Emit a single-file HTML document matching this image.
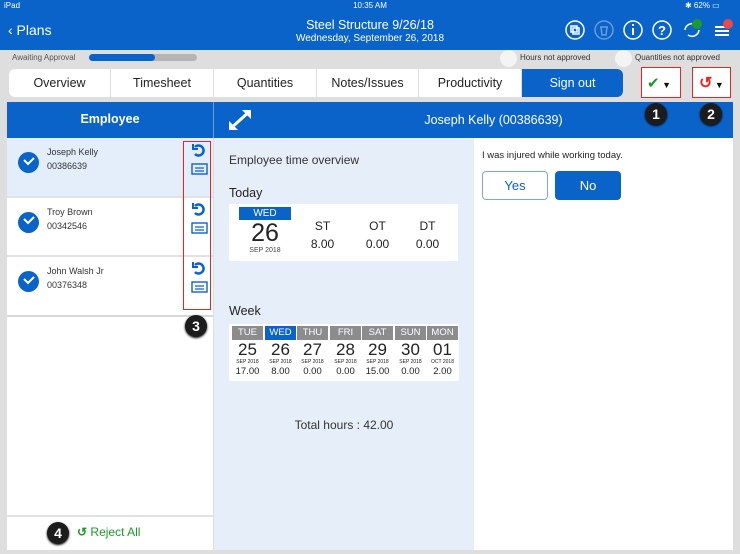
<!DOCTYPE html>
<html><head><meta charset="utf-8"><style>
*{margin:0;padding:0;box-sizing:border-box}
body{width:740px;height:554px;background:#dedede;font-family:"Liberation Sans",sans-serif;position:relative;overflow:hidden;color:#222}
.a{position:absolute}
.hdr{left:0;top:0;width:740px;height:50px;background:#0a63c9;color:#fff}
.tab{position:absolute;top:69px;height:28px;background:#fff;font-size:12.5px;text-align:center;line-height:28px;color:#222}
.badge{position:absolute;width:22px;height:22px;border-radius:50%;background:#1c1c1c;color:#fff;font-weight:bold;font-size:14px;text-align:center;line-height:22px;box-shadow:0 1px 2px #000}
.row{position:absolute;left:7px;width:206px;height:58px}
.chk{position:absolute;left:11px;top:14px;width:21px;height:21px;border-radius:50%;background:#0a63c9}
.nm{position:absolute;left:40px;top:7px;font-size:9px;line-height:14px;color:#333}
.day{position:absolute;top:326px;width:31px;text-align:center}
.day .h{background:#8c8c8c;color:#fff;font-size:9.5px;height:14px;line-height:14px}
.day .n{font-size:17px;line-height:19px}
.day .s{font-size:5px;line-height:6px}
.day .v{font-size:9.5px;line-height:13px}
</style></head><body>
<div class="a hdr">
 <div class="a" style="left:4px;top:1px;font-size:8px">iPad</div>
 <div class="a" style="left:0;width:740px;top:1px;font-size:8px;text-align:center">10:35 AM</div>
 <div class="a" style="left:685px;top:1px;font-size:8px">✱ 62% ▭</div>
 <div class="a" style="left:8px;top:22px;font-size:14px">‹ Plans</div>
 <div class="a" style="left:0;width:740px;top:18px;text-align:center;font-size:12.5px">Steel Structure 9/26/18</div>
 <div class="a" style="left:0;width:740px;top:33px;text-align:center;font-size:10px">Wednesday, September 26, 2018</div>
 <svg class="a" style="left:565px;top:18px" width="170" height="24" fill="none" stroke="#fff" stroke-width="1.5">
  <circle cx="10" cy="12" r="9"/><rect x="6" y="8" width="6" height="6"/><rect x="8" y="10" width="6" height="6"/>
  <circle cx="39" cy="12" r="9" stroke="#6a9be0"/><path d="M35 9h8M36 9l1 8h4l1-8" stroke="#6a9be0"/>
  <circle cx="68" cy="12" r="9"/><path d="M68 10v7M68 6v2" stroke-width="2"/>
  <circle cx="97" cy="12" r="9"/><text x="93" y="17" fill="#fff" stroke="none" font-size="13" font-weight="bold" font-family="Liberation Sans">?</text>
  <path d="M120 12a7 7 0 0 1 11-5M134 12a7 7 0 0 1-11 5"/>
  <circle cx="132" cy="6" r="5" fill="#1a9a2a" stroke="none"/>
  <path d="M150 9h14M150 13h14M150 17h14" stroke-width="2"/>
  <circle cx="163" cy="6" r="5" fill="#e84a4a" stroke="none"/>
 </svg>
</div>
<div class="a" style="left:12px;top:53px;font-size:8px;color:#555">Awaiting Approval</div>
<div class="a" style="left:89px;top:54px;width:108px;height:7px;border-radius:4px;background:#b5b5b5"><div style="width:66px;height:7px;border-radius:4px;background:#0a63c9"></div></div>
<div class="a" style="left:500px;top:50px;width:17px;height:17px;border-radius:50%;background:#f4f4f4"></div>
<div class="a" style="left:520px;top:53px;font-size:8px;color:#333">Hours not approved</div>
<div class="a" style="left:615px;top:50px;width:17px;height:17px;border-radius:50%;background:#f4f4f4"></div>
<div class="a" style="left:635px;top:53px;font-size:8px;color:#333">Quantities not approved</div>
<div class="tab" style="left:9px;width:101px;border-radius:6px 0 0 6px">Overview</div>
<div class="tab" style="left:111px;width:102px">Timesheet</div>
<div class="tab" style="left:214px;width:102px">Quantities</div>
<div class="tab" style="left:317px;width:101px">Notes/Issues</div>
<div class="tab" style="left:419px;width:102px">Productivity</div>
<div class="tab" style="left:522px;width:101px;background:#0a63c9;color:#fff;border-radius:0 6px 6px 0">Sign out</div>
<div class="a" style="left:641px;top:67px;width:40px;height:31px;border:1px solid #e22;background:#fff;font-size:15px;color:#1a9a2a;padding:6px 0 0 5px">✔<span style="font-size:9px;color:#111"> ▼</span></div>
<div class="a" style="left:692px;top:67px;width:39px;height:31px;border:1px solid #e22;background:#fff;font-size:16px;color:#e22;padding:5px 0 0 6px;font-weight:bold">↺<span style="font-size:9px;color:#111;font-weight:normal"> ▼</span></div>
<div class="a" style="left:7px;top:102px;width:726px;height:36px;background:#0a63c9"></div>
<div class="a" style="left:213px;top:102px;width:1px;height:36px;background:#6a9be0"></div>
<div class="a" style="left:7px;top:112px;width:206px;text-align:center;color:#fff;font-weight:bold;font-size:12.5px">Employee</div>
<div class="a" style="left:214px;top:113px;width:519px;text-align:center;color:#fff;font-size:12.5px;padding-left:40px">Joseph Kelly (00386639)</div>
<svg class="a" style="left:226px;top:107px" width="28" height="26" fill="#fff" stroke="#fff" stroke-width="3"><path d="M4 22L24 4"/><path d="M16 3h9v9z" stroke="none"/><path d="M3 14v9h9z" stroke="none"/></svg>
<div class="a" style="left:7px;top:138px;width:206px;height:412px;background:#fff"></div>
<div class="a" style="left:214px;top:138px;width:260px;height:412px;background:#e6eff9"></div>
<div class="a" style="left:474px;top:138px;width:259px;height:412px;background:#fff"></div>
<div class="row" style="top:138px;background:#e3eefa"><div class="chk"></div><div class="nm">Joseph Kelly<br>00386639</div></div>
<div class="a" style="left:7px;top:196px;width:206px;height:2px;background:#e2e2e2"></div>
<div class="row" style="top:198px"><div class="chk"></div><div class="nm">Troy Brown<br>00342546</div></div>
<div class="a" style="left:7px;top:255px;width:206px;height:2px;background:#e2e2e2"></div>
<div class="row" style="top:257px"><div class="chk"></div><div class="nm">John Walsh Jr<br>00376348</div></div>
<div class="a" style="left:7px;top:315px;width:206px;height:2px;background:#d8d8d8"></div>
<svg class="a" style="left:18px;top:138px" width="30" height="200" fill="none" stroke="#fff" stroke-width="2"><path d="M6 22l4 4 6-6"/><path d="M6 81l4 4 6-6"/><path d="M6 141l4 4 6-6"/></svg>
<div class="a" style="left:183px;top:141px;width:28px;height:169px;border:1px solid #e22"></div>
<svg class="a" style="left:190px;top:142px" width="20" height="160" fill="none" stroke="#0a63c9" stroke-width="2.5">
 <g><path d="M5 5a5 5 0 1 1 0 7"/><path d="M3 2v5h5" stroke-width="2"/><rect x="2" y="22" width="15" height="10" stroke-width="1.4"/><path d="M5 26h9M5 29h9" stroke-width="1.2"/></g>
 <g transform="translate(0,59)"><path d="M5 5a5 5 0 1 1 0 7"/><path d="M3 2v5h5" stroke-width="2"/><rect x="2" y="22" width="15" height="10" stroke-width="1.4"/><path d="M5 26h9M5 29h9" stroke-width="1.2"/></g>
 <g transform="translate(0,118)"><path d="M5 5a5 5 0 1 1 0 7"/><path d="M3 2v5h5" stroke-width="2"/><rect x="2" y="22" width="15" height="10" stroke-width="1.4"/><path d="M5 26h9M5 29h9" stroke-width="1.2"/></g>
</svg>
<div class="badge" style="left:645px;top:103px">1</div>
<div class="badge" style="left:700px;top:103px">2</div>
<div class="badge" style="left:185px;top:315px">3</div>
<div class="badge" style="left:47px;top:522px">4</div>
<div class="a" style="left:7px;top:515px;width:206px;height:2px;background:#e2e2e2"></div>
<div class="a" style="left:77px;top:525px;font-size:12px;color:#1a9a2a"><b>↺</b> Reject All</div>
<div class="a" style="left:229px;top:153px;font-size:12px;color:#333">Employee time overview</div>
<div class="a" style="left:229px;top:186px;font-size:12.5px">Today</div>
<div class="a" style="left:229px;top:204px;width:229px;height:57px;background:#fff"></div>
<div class="a" style="left:239px;top:207px;width:52px;height:13px;background:#0a63c9;color:#fff;font-size:10px;text-align:center;line-height:13px">WED</div>
<div class="a" style="left:239px;top:219px;width:52px;text-align:center;font-size:25px">26</div>
<div class="a" style="left:239px;top:247px;width:52px;text-align:center;font-size:7px;color:#444">SEP 2018</div>
<div class="a" style="left:300px;top:217px;width:45px;text-align:center;font-size:12px;line-height:18px">ST<br>8.00</div>
<div class="a" style="left:355px;top:217px;width:45px;text-align:center;font-size:12px;line-height:18px">OT<br>0.00</div>
<div class="a" style="left:405px;top:217px;width:45px;text-align:center;font-size:12px;line-height:18px">DT<br>0.00</div>
<div class="a" style="left:229px;top:304px;font-size:12.5px">Week</div>
<div class="a" style="left:229px;top:324px;width:230px;height:57px;background:#fff"></div>
<div class="day" style="left:232px"><div class="h">TUE</div><div class="n">25</div><div class="s">SEP 2018</div><div class="v">17.00</div></div>
<div class="day" style="left:265px"><div class="h" style="background:#0a63c9">WED</div><div class="n">26</div><div class="s">SEP 2018</div><div class="v">8.00</div></div>
<div class="day" style="left:297px"><div class="h">THU</div><div class="n">27</div><div class="s">SEP 2018</div><div class="v">0.00</div></div>
<div class="day" style="left:330px"><div class="h">FRI</div><div class="n">28</div><div class="s">SEP 2018</div><div class="v">0.00</div></div>
<div class="day" style="left:362px"><div class="h">SAT</div><div class="n">29</div><div class="s">SEP 2018</div><div class="v">15.00</div></div>
<div class="day" style="left:395px"><div class="h">SUN</div><div class="n">30</div><div class="s">SEP 2018</div><div class="v">0.00</div></div>
<div class="day" style="left:427px"><div class="h">MON</div><div class="n">01</div><div class="s">OCT 2018</div><div class="v">2.00</div></div>
<div class="a" style="left:214px;top:418px;width:260px;text-align:center;font-size:12px;color:#333">Total hours : 42.00</div>
<div class="a" style="left:482px;top:150px;font-size:9.5px;color:#222">I was injured while working today.</div>
<div class="a" style="left:482px;top:171px;width:66px;height:29px;border:1px solid #7aa9d8;border-radius:4px;text-align:center;line-height:27px;font-size:13px;color:#0a63c9">Yes</div>
<div class="a" style="left:555px;top:171px;width:66px;height:29px;background:#0a63c9;border-radius:4px;text-align:center;line-height:29px;font-size:13px;color:#fff">No</div>
</body></html>
